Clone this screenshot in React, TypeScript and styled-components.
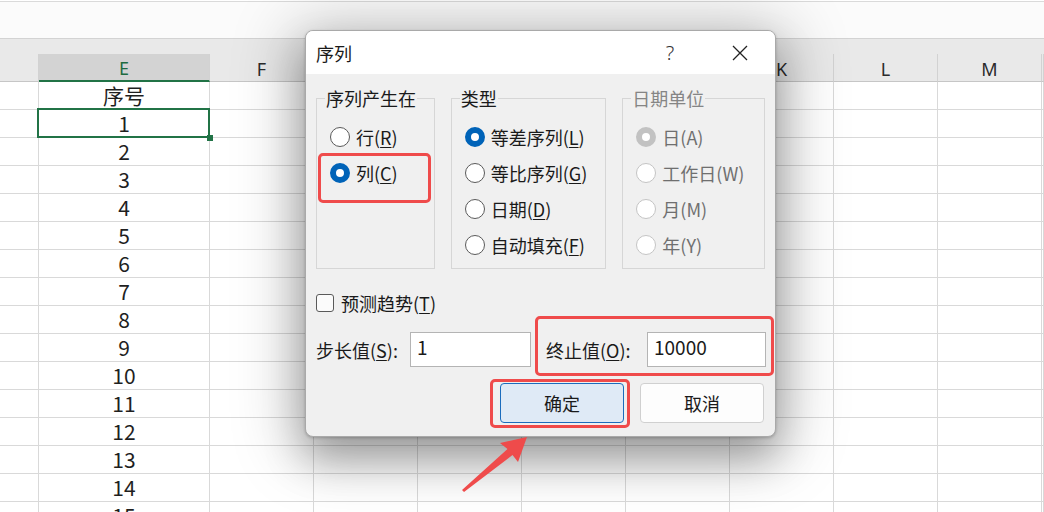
import React from "react";
import styled, { createGlobalStyle, css } from "styled-components";

const GlobalStyle = createGlobalStyle`
  html, body {
    margin: 0;
    padding: 0;
    background: #ffffff;
    overflow: hidden;
  }
  * {
    box-sizing: border-box;
  }
`;

const FONT = `"Noto Sans CJK SC", "Noto Sans", sans-serif`;
const RED = "#ef4b4b";

const Page = styled.div`
  position: relative;
  width: 1044px;
  height: 512px;
  overflow: hidden;
  background: #ffffff;
  font-family: ${FONT};
`;

const TopBar = styled.div`
  margin-top: 1px;
  height: 37px;
  border-top: 1px solid #dadada;
  background: #fbfbfb;
`;

const HeaderBand = styled.div`
  padding-top: 15px;
  background: #e9e9e9;
  border-top: 1px solid #d3d3d3;
`;

const Columns = styled.div`
  display: grid;
  grid-template-columns: 39px 171px repeat(8, 104px) 1fr;
`;

const HeaderCell = styled.div<{ $active?: boolean }>`
  height: 28px;
  display: flex;
  align-items: center;
  justify-content: center;
  padding-top: 2px;
  font-family: "Noto Sans", sans-serif;
  font-size: 18px;
  line-height: 1;
  color: #2b2b2b;
  border-right: 1px solid #d2d2d2;
  border-bottom: 1px solid #c6c6c6;
  ${(p) =>
    p.$active &&
    css`
      background: #d3d3d3;
      color: #1e6b41;
      border-bottom: 2px solid #217346;
    `}
`;

const Cell = styled.div<{ $selected?: boolean }>`
  position: relative;
  height: 28px;
  display: flex;
  align-items: center;
  justify-content: center;
  font-size: 21px;
  line-height: 1;
  color: #1f1f1f;
  border-right: 1px solid #d9d9d9;
  border-bottom: 1px solid #d9d9d9;
  ${(p) =>
    p.$selected &&
    css`
      &::after {
        content: "";
        position: absolute;
        left: -2px;
        top: -2px;
        right: -1px;
        bottom: -1px;
        border: 2px solid #217346;
      }
      &::before {
        content: "";
        position: absolute;
        right: -4px;
        bottom: -4px;
        width: 6px;
        height: 6px;
        background: #217346;
        z-index: 1;
      }
    `}
`;

const Dialog = styled.div`
  position: absolute;
  left: 305px;
  top: 30px;
  width: 471px;
  height: 407px;
  border: 1px solid #a9a9a9;
  border-radius: 8px;
  overflow: hidden;
  background: #f0f0f0;
  box-shadow: 0 22px 40px 0 rgba(0, 0, 0, 0.28),
    0 6px 64px 12px rgba(0, 0, 0, 0.22), 0 1px 3px rgba(0, 0, 0, 0.2);
  color: #1a1a1a;
  font-size: 18px;
`;

const TitleBar = styled.div`
  height: 43px;
  display: flex;
  align-items: center;
  background: #ffffff;
  padding-left: 10px;
`;

const Title = styled.div`
  flex: 1;
  font-size: 18px;
  line-height: 1;
`;

const TitleButton = styled.div`
  width: 70px;
  height: 43px;
  display: flex;
  align-items: center;
  justify-content: center;
  font-family: "Noto Sans", sans-serif;
  font-size: 20px;
  font-weight: 300;
  color: #333;
`;

const Body = styled.div`
  padding: 15px 10px 0 10px;
`;

const Groups = styled.div`
  display: flex;
  gap: 16px;
`;

const Group = styled.fieldset<{ $width: number }>`
  width: ${(p) => p.$width}px;
  margin: 0;
  min-inline-size: 0;
  border: 1px solid #d6d6d6;
  padding: 12px 0 5px 13px;
`;

const Legend = styled.legend<{ $disabled?: boolean }>`
  margin-left: -5px;
  padding: 0 1px;
  font-size: 18px;
  line-height: 18px;
  color: ${(p) => (p.$disabled ? "#858585" : "#1a1a1a")};
`;

const RadioRow = styled.div<{ $disabled?: boolean; $marked?: boolean }>`
  position: relative;
  height: 36px;
  display: flex;
  align-items: center;
  gap: 6px;
  line-height: 1;
  white-space: nowrap;
  color: ${(p) => (p.$disabled ? "#6f6f6f" : "#1a1a1a")};
  ${(p) =>
    p.$marked &&
    css`
      &::after {
        content: "";
        position: absolute;
        left: -12px;
        top: -2px;
        width: 107px;
        height: 44px;
        border: 3px solid ${RED};
        border-radius: 5px;
      }
    `}
`;

const RadioDot = styled.span<{ $checked?: boolean; $disabled?: boolean }>`
  width: 20px;
  height: 20px;
  border-radius: 50%;
  flex-shrink: 0;
  background: #ffffff;
  border: 1px solid ${(p) => (p.$disabled ? "#c4c4c4" : "#5a5a5a")};
  ${(p) =>
    p.$checked &&
    css`
      border: 6px solid ${p.$disabled ? "#c2c2c2" : "#0063b8"};
    `}
`;

const CheckRow = styled.div`
  margin-top: 22px;
  height: 24px;
  display: flex;
  align-items: center;
  gap: 7px;
  line-height: 1;
`;

const CheckBox = styled.span`
  width: 18px;
  height: 18px;
  border: 1px solid #5a5a5a;
  border-radius: 3px;
  background: #fbfbfb;
`;

const FieldRow = styled.div`
  margin-top: 17px;
  display: flex;
  align-items: center;
`;

const Field = styled.div<{ $marked?: boolean }>`
  position: relative;
  display: flex;
  align-items: center;
  ${(p) =>
    p.$marked &&
    css`
      margin-left: 15px;
      &::after {
        content: "";
        position: absolute;
        left: -11px;
        top: -16px;
        right: -8px;
        bottom: -9px;
        border: 3px solid ${RED};
        border-radius: 5px;
        pointer-events: none;
      }
    `}
`;

const FieldLabel = styled.span<{ $width: number }>`
  width: ${(p) => p.$width}px;
  line-height: 1;
  white-space: nowrap;
`;

const TextBox = styled.div<{ $width: number }>`
  width: ${(p) => p.$width}px;
  height: 35px;
  background: #ffffff;
  border: 1px solid #b4b4b4;
  padding-left: 6px;
  display: flex;
  align-items: center;
  font-size: 19px;
  line-height: 1;
  padding-bottom: 6px;
`;

const ButtonRow = styled.div`
  margin-top: 16px;
  padding-right: 1px;
  display: flex;
  justify-content: flex-end;
  gap: 16px;
`;

const Button = styled.div<{ $primary?: boolean; $marked?: boolean }>`
  position: relative;
  width: 124px;
  height: 40px;
  display: flex;
  align-items: center;
  justify-content: center;
  border-radius: 4px;
  line-height: 1;
  background: ${(p) => (p.$primary ? "#dfeaf6" : "#fdfdfd")};
  border: 1px solid ${(p) => (p.$primary ? "#1b6cbd" : "#d0d0d0")};
  ${(p) =>
    p.$marked &&
    css`
      &::after {
        content: "";
        position: absolute;
        left: -11px;
        top: -5px;
        right: -7px;
        bottom: -6px;
        border: 3px solid ${RED};
        border-radius: 5px;
      }
    `}
`;

const Arrow = styled.svg`
  position: absolute;
  left: 455px;
  top: 430px;
`;

const Key = styled.u`
  text-underline-offset: 2px;
`;

const columns = ["", "E", "F", "G", "H", "I", "J", "K", "L", "M", ""];
const values = ["序号", ...Array.from({ length: 15 }, (_, i) => String(i + 1))];

function Label({ text, k }: { text: string; k: string }) {
  return (
    <span>
      {text}(<Key>{k}</Key>)
    </span>
  );
}

export default function App() {
  return (
    <Page>
      <GlobalStyle />
      <TopBar />
      <HeaderBand>
        <Columns>
          {columns.map((c, i) => (
            <HeaderCell key={i} $active={c === "E"}>
              {c}
            </HeaderCell>
          ))}
        </Columns>
      </HeaderBand>
      <Columns>
        {values.map((v, r) =>
          columns.map((_, i) => (
            <Cell key={`${r}-${i}`} $selected={r === 1 && i === 1}>
              {i === 1 ? v : ""}
            </Cell>
          ))
        )}
      </Columns>

      <Dialog>
        <TitleBar>
          <Title>序列</Title>
          <TitleButton>?</TitleButton>
          <TitleButton>
            <svg width="16" height="16" viewBox="0 0 16 16">
              <path d="M1 1 L15 15 M15 1 L1 15" stroke="#222" strokeWidth="1.3" />
            </svg>
          </TitleButton>
        </TitleBar>
        <Body>
          <Groups>
            <Group $width={119}>
              <Legend>序列产生在</Legend>
              <RadioRow>
                <RadioDot />
                <Label text="行" k="R" />
              </RadioRow>
              <RadioRow $marked>
                <RadioDot $checked />
                <Label text="列" k="C" />
              </RadioRow>
            </Group>
            <Group $width={156}>
              <Legend>类型</Legend>
              <RadioRow>
                <RadioDot $checked />
                <Label text="等差序列" k="L" />
              </RadioRow>
              <RadioRow>
                <RadioDot />
                <Label text="等比序列" k="G" />
              </RadioRow>
              <RadioRow>
                <RadioDot />
                <Label text="日期" k="D" />
              </RadioRow>
              <RadioRow>
                <RadioDot />
                <Label text="自动填充" k="F" />
              </RadioRow>
            </Group>
            <Group $width={143}>
              <Legend $disabled>日期单位</Legend>
              <RadioRow $disabled>
                <RadioDot $checked $disabled />
                <span>日(A)</span>
              </RadioRow>
              <RadioRow $disabled>
                <RadioDot $disabled />
                <span>工作日(W)</span>
              </RadioRow>
              <RadioRow $disabled>
                <RadioDot $disabled />
                <span>月(M)</span>
              </RadioRow>
              <RadioRow $disabled>
                <RadioDot $disabled />
                <span>年(Y)</span>
              </RadioRow>
            </Group>
          </Groups>

          <CheckRow>
            <CheckBox />
            <Label text="预测趋势" k="T" />
          </CheckRow>

          <FieldRow>
            <Field>
              <FieldLabel $width={94}>
                步长值(<Key>S</Key>):
              </FieldLabel>
              <TextBox $width={121}>1</TextBox>
            </Field>
            <Field $marked>
              <FieldLabel $width={101}>
                终止值(<Key>O</Key>):
              </FieldLabel>
              <TextBox $width={119}>10000</TextBox>
            </Field>
          </FieldRow>

          <ButtonRow>
            <Button $primary $marked>
              确定
            </Button>
            <Button>取消</Button>
          </ButtonRow>
        </Body>
      </Dialog>

      <Arrow width="80" height="70" viewBox="0 0 80 70">
        <polygon
          points="72,7 63,32 57.5,25 9,62 7,60 52.5,19 45,13"
          fill={RED}
        />
      </Arrow>
    </Page>
  );
}
